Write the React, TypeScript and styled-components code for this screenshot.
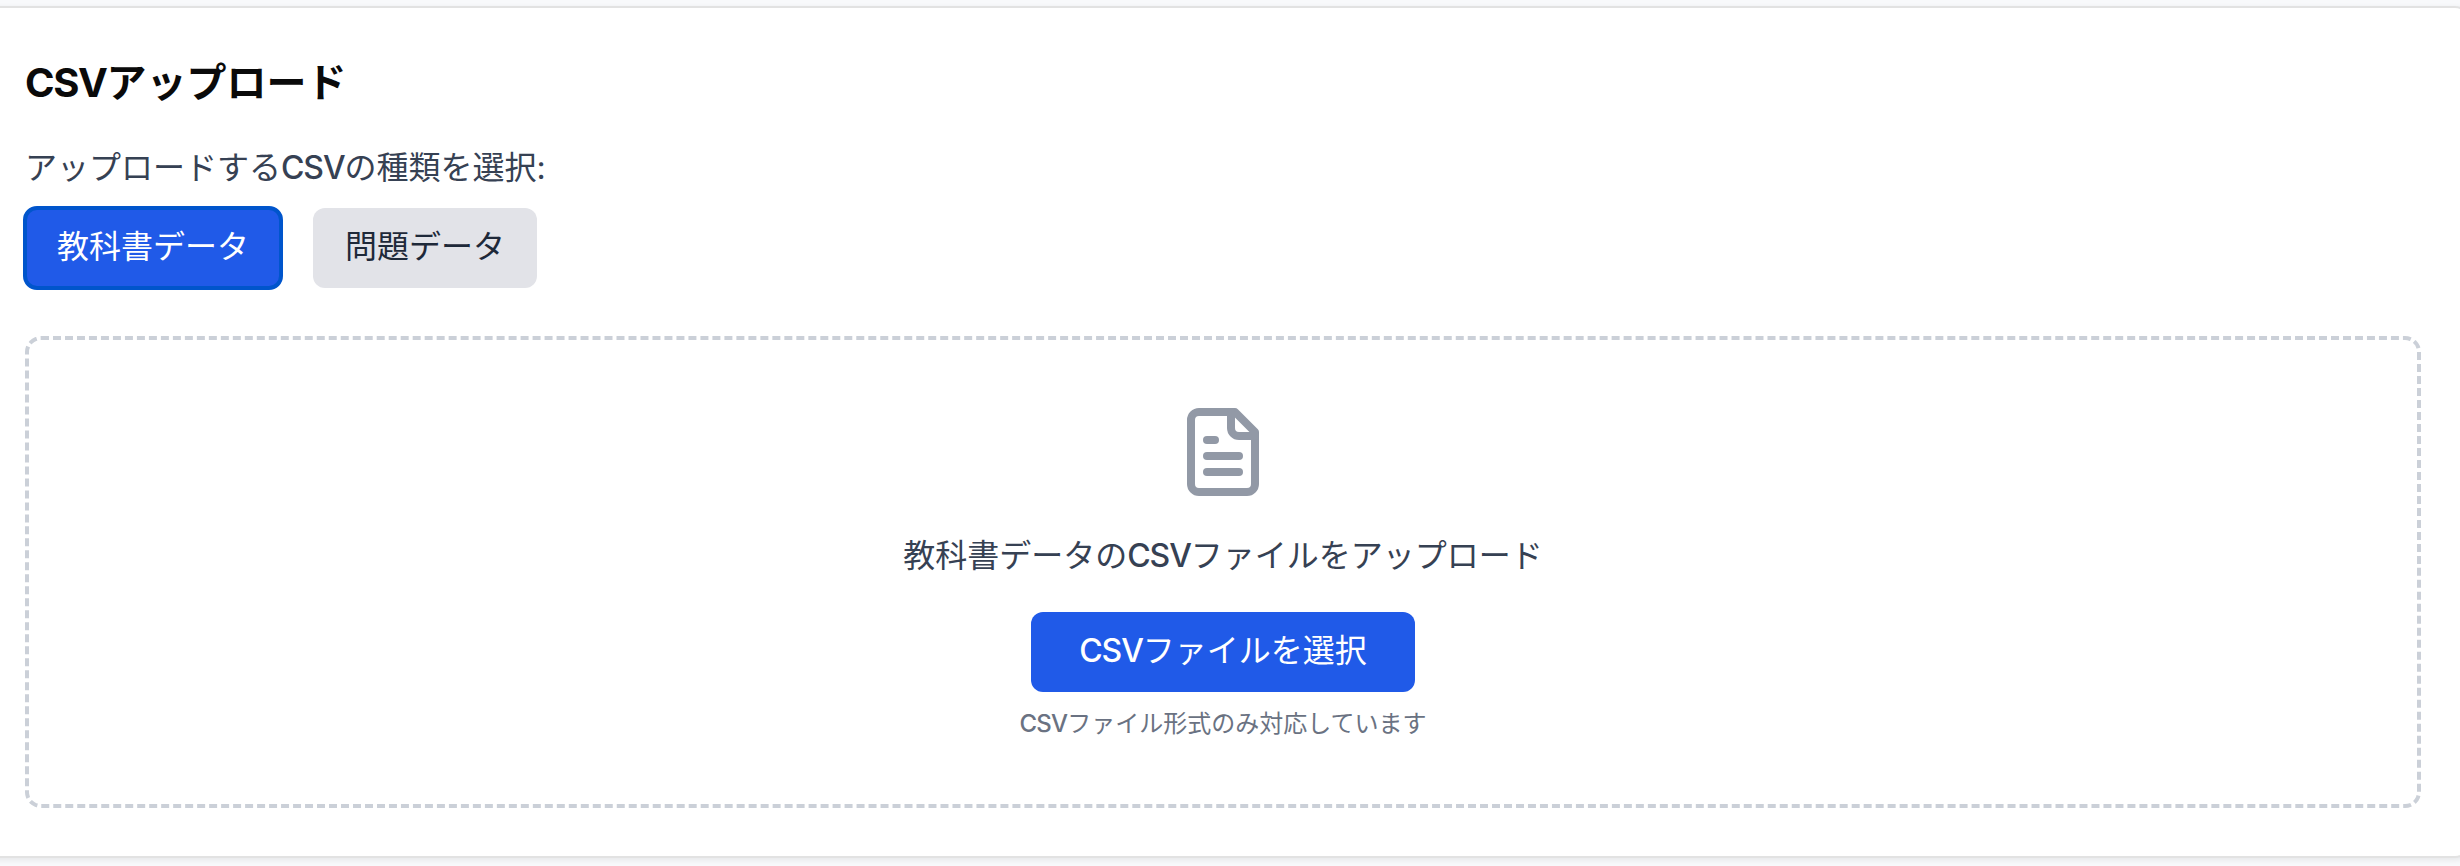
import React from "react";
import styled, { createGlobalStyle, css } from "styled-components";

const GlobalStyle = createGlobalStyle`
  *, *::before, *::after { box-sizing: border-box; }
  body {
    margin: 0;
    background: #f8f9fb;
    font-family: "Inter", "Noto Sans CJK JP", sans-serif;
    color: #0a0a0a;
    overflow: hidden;
  }
`;

const Page = styled.main`
  height: 866px;
  padding-top: 6px;
  overflow: hidden;
`;

const Card = styled.section`
  width: 2496px;
  height: 852px;
  margin-left: -25px;
  padding: 48px;
  border: 2px solid #e2e2e2;
  border-radius: 16px;
  background: #fff;
  box-shadow: 0 2px 6px rgba(0, 0, 0, 0.08);
`;

const Latin = styled.span<{ $bold?: boolean }>`
  font-weight: ${(p) => (p.$bold ? 700 : 500)};
  letter-spacing: -0.035em;
`;

const Title = styled.h2`
  margin: 0 0 32px;
  height: 56px;
  font-size: 40px;
  line-height: 54px;
  font-weight: 700;
`;

const Label = styled.p`
  margin: 0 0 16px;
  height: 48px;
  font-size: 32px;
  line-height: 47px;
  color: #364153;
`;

const TypeTabs = styled.div`
  display: flex;
  gap: 32px;
  margin-bottom: 48px;
`;

const Button = styled.button<{ $tone: "primary" | "muted"; $wide?: boolean; $focused?: boolean }>`
  height: 80px;
  padding: 0 ${(p) => (p.$wide ? 48 : 32)}px 2px;
  border: 0;
  border-radius: 12px;
  font: inherit;
  font-size: 32px;
  line-height: 48px;
  white-space: nowrap;
  ${(p) =>
    p.$tone === "primary"
      ? css`
          background: #205ae8;
          color: #fff;
        `
      : css`
          background: #e2e3e8;
          color: #1e2939;
        `}
  ${(p) =>
    p.$focused &&
    css`
      outline: 4px solid #0055cc;
      outline-offset: -2px;
    `}
`;

const DropZone = styled.div`
  display: flex;
  flex-direction: column;
  align-items: center;
  height: 472px;
  padding: 64px;
  border: 4px dashed #cbd0d8;
  border-radius: 16px;
`;

const FileIcon = styled.svg`
  width: 96px;
  height: 96px;
  margin-bottom: 32px;
  flex: none;
  color: #9299a6;
`;

const DropText = styled.p`
  margin: 0 0 32px;
  height: 48px;
  font-size: 32px;
  line-height: 47px;
  color: #364153;
`;

const Hint = styled.p`
  margin: 16px 0 0;
  height: 32px;
  font-size: 24px;
  line-height: 31px;
  color: #6a7282;
`;

export default function App() {
  return (
    <>
      <GlobalStyle />
      <Page>
        <Card>
          <Title><Latin $bold>CSV</Latin>アップロード</Title>
          <Label>アップロードする<Latin>CSV</Latin>の種類を選択:</Label>
          <TypeTabs>
            <Button $tone="primary" $focused>教科書データ</Button>
            <Button $tone="muted">問題データ</Button>
          </TypeTabs>
          <DropZone>
            <FileIcon
              viewBox="0 0 24 24"
              fill="none"
              stroke="currentColor"
              strokeWidth="2"
              strokeLinecap="round"
              strokeLinejoin="round"
            >
              <path d="M15 2H6a2 2 0 0 0-2 2v16a2 2 0 0 0 2 2h12a2 2 0 0 0 2-2V7Z" />
              <path d="M14 2v4a2 2 0 0 0 2 2h4" />
              <path d="M10 9H8" />
              <path d="M16 13H8" />
              <path d="M16 17H8" />
            </FileIcon>
            <DropText>教科書データの<Latin>CSV</Latin>ファイルをアップロード</DropText>
            <Button $tone="primary" $wide><Latin>CSV</Latin>ファイルを選択</Button>
            <Hint><Latin>CSV</Latin>ファイル形式のみ対応しています</Hint>
          </DropZone>
        </Card>
      </Page>
    </>
  );
}
